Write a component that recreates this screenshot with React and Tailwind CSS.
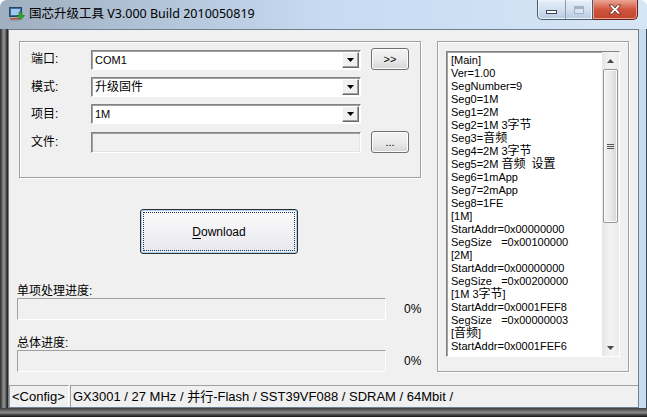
import React from "react";

const listLines = [
  "[Main]",
  "Ver=1.00",
  "SegNumber=9",
  "Seg0=1M",
  "Seg1=2M",
  "Seg2=1M 3字节",
  "Seg3=音频",
  "Seg4=2M 3字节",
  "Seg5=2M 音频  设置",
  "Seg6=1mApp",
  "Seg7=2mApp",
  "Seg8=1FE",
  "[1M]",
  "StartAddr=0x00000000",
  "SegSize   =0x00100000",
  "[2M]",
  "StartAddr=0x00000000",
  "SegSize   =0x00200000",
  "[1M 3字节]",
  "StartAddr=0x0001FEF8",
  "SegSize   =0x00000003",
  "[音频]",
  "StartAddr=0x0001FEF6",
];

// CJK bits in the ini text are a touch larger than the latin ones
const renderLine = (line) =>
  line.split(/([\u4e00-\u9fff]+)/).map((part, i) =>
    /[\u4e00-\u9fff]/.test(part) ? (
      <span key={i} className="text-[12px] leading-[13px]">
        {part}
      </span>
    ) : (
      <span key={i}>{part}</span>
    )
  );

const Combo = ({ value, size }) => (
  <div className="flex h-[20px] w-[270px] border border-t-[#828282] border-l-[#828282] border-r-white border-b-white bg-white shadow-[inset_1px_1px_0_#a0a0a0]">
    <div className={`flex-1 pl-[3px] pt-[1px] leading-[17px] text-black ${size}`}>{value}</div>
    <div className="my-[1px] mr-[1px] flex w-[17px] items-center justify-center border border-t-white border-l-white border-r-[#696969] border-b-[#696969] bg-[#f0f0f0] shadow-[inset_-1px_-1px_0_#a0a0a0]">
      <svg width="7" height="4" viewBox="0 0 7 4">
        <path d="M0 0h7L3.5 4z" fill="#000" />
      </svg>
    </div>
  </div>
);

const SmallButton = ({ children }) => (
  <div className="flex h-[22px] w-[38px] items-center justify-center rounded-[3px] border border-[#707070] bg-linear-to-b from-[#f4f4f4] via-[#ebebeb] to-[#d6d6d6] text-[11px] leading-none text-black shadow-[inset_0_0_0_1px_#fcfcfc]">
    {children}
  </div>
);

const Label = ({ children }) => (
  <div className="w-[60px] self-center text-[12px] leading-[14px] text-black">{children}</div>
);

const ProgressRow = () => (
  <div className="flex items-center">
    <div className="h-[22px] w-[369px] border border-t-[#a0a0a0] border-l-[#a0a0a0] border-r-white border-b-white bg-[#f0f0f0]" />
    <div className="ml-[18px] text-[12px] text-black">0%</div>
  </div>
);

export default function App() {
  return (
    <div className="flex h-[417px] w-[647px] flex-col overflow-hidden rounded-t-[7px] bg-[#c9dcf1] font-['Liberation_Sans','Noto_Sans_CJK_SC',sans-serif]">
      {/* title bar */}
      <div className="flex h-[29px] items-start bg-linear-to-r from-[#9fafc0] via-[#c6daf1] to-[#d7e6f6]">
        <div className="pl-[9px] pt-[6px]">
          <svg width="16" height="17" viewBox="0 0 16 17">
            <rect x="0.5" y="1.5" width="12" height="9" fill="#3f6f9f" stroke="#23466b" />
            <rect x="2" y="3" width="9" height="6" fill="#9cc9ec" />
            <rect x="1" y="12" width="9" height="1.5" fill="#d04a2a" />
            <rect x="1" y="13.5" width="9" height="1" fill="#7b8794" />
            <path d="M10 6h3v3.5h2.5L11.5 14 7.5 9.5H10z" fill="#35a23a" stroke="#1e6e22" strokeWidth="0.6" />
          </svg>
        </div>
        <div className="ml-[4px] pt-[5px] font-['Noto_Sans','Noto_Sans_CJK_SC',sans-serif] text-[12.5px] leading-[17px] text-black">
          国芯升级工具 V3.000 Build 2010050819
        </div>
        <div className="ml-auto mr-[9px] flex">
          <div className="flex h-[20px] overflow-hidden rounded-bl-[5px] border border-t-0 border-[#4a5a70] bg-linear-to-b from-[#e6eef8] via-[#d3e0f0] to-[#b6c9e2] shadow-[inset_0_0_0_1px_#eef4fb]">
            <div className="flex w-[27px] items-end justify-center pb-[5px]">
              <div className="h-[4px] w-[11px] border border-[#3a4658] bg-white" />
            </div>
            <div className="flex w-[27px] items-center justify-center border-l border-[#8c9db3]">
              <div className="h-[8px] w-[10px] border border-[#a3b2c6] bg-[#dbe5f1] shadow-[inset_0_2px_0_#a3b2c6]" />
            </div>
          </div>
          <div className="flex h-[20px] w-[45px] items-center justify-center rounded-br-[5px] border border-t-0 border-l-0 border-[#5e231a] bg-linear-to-b from-[#e9a796] via-[#d0533d] to-[#c4462e] shadow-[inset_0_0_0_1px_#eaa08f]">
            <svg width="14" height="11" viewBox="0 0 14 11">
              <path d="M1 1h3.5L7 4l2.5-3H13L9 5.5 13 10H9.5L7 7l-2.5 3H1l4-4.5z" fill="#fff" stroke="#5a2a22" strokeWidth="0.8" />
            </svg>
          </div>
        </div>
      </div>

      <div className="flex h-[379px]">
        <div className="w-[8px] bg-linear-to-r from-[#2e2e2e] via-[#9a9a9a] to-[#1a1a1a]" />

        {/* client */}
        <div className="flex w-[631px] flex-col border border-[#6f7f92] bg-[#f0f0f0]">
          <div className="flex h-[355px] pt-[11px]">
            {/* left column */}
            <div className="w-[428px] pl-[8px]">
              <div className="ml-[2px] h-[137px] w-[402px] border border-[#a0a0a0] pl-[11px] pt-[6px] shadow-[inset_1px_1px_0_#fff,1px_1px_0_#fff]">
                <div className="flex h-[22px] items-end">
                  <Label>端口:</Label>
                  <Combo value="COM1" size="text-[11px]" />
                  <div className="ml-[10px]">
                    <SmallButton>&gt;&gt;</SmallButton>
                  </div>
                </div>
                <div className="mt-[7px] flex">
                  <Label>模式:</Label>
                  <Combo value="升级固件" size="text-[12px]" />
                </div>
                <div className="mt-[7px] flex">
                  <Label>项目:</Label>
                  <Combo value="1M" size="text-[11px]" />
                </div>
                <div className="mt-[7px] flex h-[22px] items-end">
                  <Label>文件:</Label>
                  <div className="h-[21px] w-[270px] border border-t-[#828282] border-l-[#828282] border-r-white border-b-white bg-[#f0f0f0] shadow-[inset_1px_1px_0_#a0a0a0,inset_-1px_-1px_0_#e3e3e3]" />
                  <div className="ml-[10px]">
                    <SmallButton>...</SmallButton>
                  </div>
                </div>
              </div>

              <div className="ml-[123px] mt-[31px] h-[45px] w-[158px] rounded-[3px] border border-[#2e2e2e] bg-linear-to-b from-[#fbfbfb] via-[#f2f2f5] to-[#e6e6ee] p-[2px] shadow-[inset_0_0_0_1px_#a9d4f2]">
                <div className="flex h-full items-center justify-center border border-dotted border-[#24375a] text-[12px] text-black">
                  <span className="underline underline-offset-2">D</span>ownload
                </div>
              </div>

              <div className="mt-[31px] h-[13px] text-[12px] leading-[13px] text-black">单项处理进度:</div>
              <ProgressRow />
              <div className="mt-[17px] h-[13px] text-[12px] leading-[13px] text-black">总体进度:</div>
              <ProgressRow />
            </div>

            {/* right group */}
            <div className="h-[331px] w-[192px] border border-[#a0a0a0] pl-[8px] pt-[9px] shadow-[inset_1px_1px_0_#fff,1px_1px_0_#fff]">
              <div className="flex h-[306px] w-[174px] border border-t-[#828282] border-l-[#828282] border-r-white border-b-white bg-white shadow-[inset_1px_1px_0_#a0a0a0]">
                <div className="flex-1 overflow-hidden whitespace-pre pl-[4px] pt-[2px] text-[11px] leading-[13px] text-black">
                  {listLines.map((line, i) => (
                    <div key={i} className="h-[13px]">
                      {renderLine(line)}
                    </div>
                  ))}
                </div>
                {/* scrollbar */}
                <div className="flex w-[17px] flex-col bg-linear-to-r from-[#e6e6e6] via-[#f3f3f3] to-[#ececec]">
                  <div className="flex h-[17px] items-center justify-center">
                    <svg width="7" height="4" viewBox="0 0 7 4">
                      <path d="M0 4h7L3.5 0z" fill="#4a4a4a" />
                    </svg>
                  </div>
                  <div className="mx-[1px] flex h-[154px] items-center justify-center rounded-[2px] border border-[#979797] bg-linear-to-r from-[#f4f4f4] via-[#e9e9e9] to-[#d6d6d6] shadow-[inset_0_0_0_1px_#fafafa]">
                    <div className="flex flex-col gap-[1px]">
                      <div className="h-[1px] w-[7px] bg-[#555]" />
                      <div className="h-[1px] w-[7px] bg-[#555]" />
                      <div className="h-[1px] w-[7px] bg-[#555]" />
                    </div>
                  </div>
                  <div className="flex-1" />
                  <div className="flex h-[17px] items-center justify-center">
                    <svg width="7" height="4" viewBox="0 0 7 4">
                      <path d="M0 0h7L3.5 4z" fill="#4a4a4a" />
                    </svg>
                  </div>
                </div>
              </div>
            </div>
          </div>

          {/* status bar */}
          <div className="flex h-[22px] text-[13px] text-black">
            <div className="flex w-[60px] items-center border border-b-0 border-t-[#a0a0a0] border-l-[#a0a0a0] border-r-white pl-[2px]">
              &lt;Config&gt;
            </div>
            <div className="ml-[1px] flex flex-1 items-center border-t border-l border-[#a0a0a0] pl-[2px]">
              GX3001 / 27 MHz / 并行-Flash / SST39VF088 / SDRAM / 64Mbit /
            </div>
          </div>
        </div>

        <div className="w-[8px] border-r border-[#3d4b5d] bg-[#c8dcf2]" />
      </div>

      <div className="h-[9px] bg-linear-to-b from-[#3f3f3f] via-[#8a8a8a] to-[#141414]" />
    </div>
  );
}
